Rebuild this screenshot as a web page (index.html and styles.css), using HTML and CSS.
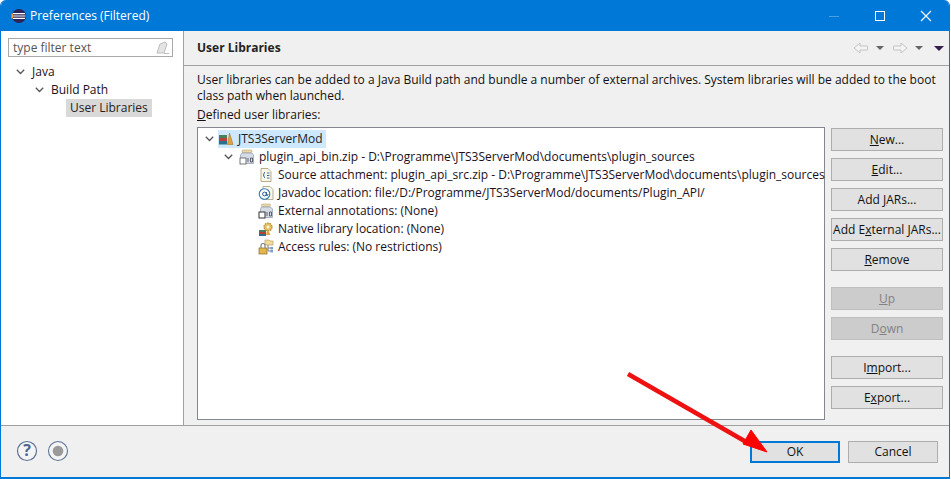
FILE: index.html
```html
<!DOCTYPE html>
<html lang="en">
<head>
<meta charset="utf-8">
<title>Preferences (Filtered)</title>
<link rel="stylesheet" href="styles.css">
</head>
<body>
<div class="window">
  <header class="titlebar">
    <svg class="app-icon" width="16" height="16" viewBox="0 0 16 16"><circle cx="8" cy="8" r="7" fill="#2c2255"/><path d="M1.5 5.5A7 7 0 0 0 1.5 10.5" stroke="#f7941e" stroke-width="1.6" fill="none"/><path d="M2 5.6h12M1.5 8h13M2 10.4h12" stroke="#fff" stroke-width="1.1"/></svg>
    <span class="title">Preferences (Filtered)</span>
    <div class="win-controls">
      <span class="wc"><svg width="12" height="12" viewBox="0 0 12 12"><path d="M1 6.5h10" stroke="#4f9fe3"/></svg></span>
      <span class="wc"><svg width="12" height="12" viewBox="0 0 12 12"><rect x="1.5" y="1.5" width="9" height="9" fill="none" stroke="#fff"/></svg></span>
      <span class="wc"><svg width="12" height="12" viewBox="0 0 12 12"><path d="M1 1l10 10M11 1L1 11" stroke="#fff" stroke-width="1.1"/></svg></span>
    </div>
  </header>
  <div class="body">
    <aside class="sidebar">
      <div class="filter">
        <span>type filter text</span>
        <svg width="16" height="14" viewBox="0 0 16 14"><path d="M2 12l3-9 5-2 2 2-3 9z" fill="#e4e4e4" stroke="#bdbdbd"/><path d="M9 12.5h5" stroke="#bdbdbd"/></svg>
      </div>
      <ul class="nav">
        <li class="nav-row lvl0"><svg class="chev" width="9" height="6" viewBox="0 0 9 6"><path d="M.8.8l3.7 3.7L8.200.8" fill="none" stroke="#555" stroke-width="1.300"/></svg><span class="nav-text">Java</span></li>
        <li class="nav-row lvl1"><svg class="chev" width="9" height="6" viewBox="0 0 9 6"><path d="M.8.8l3.7 3.7L8.200.8" fill="none" stroke="#555" stroke-width="1.300"/></svg><span class="nav-text">Build Path</span></li>
        <li class="nav-row lvl2"><span class="nav-text selected">User Libraries</span></li>
      </ul>
    </aside>
    <main class="main">
      <div class="page-head">
        <h1>User Libraries</h1>
        <div class="head-tools">
          <svg width="16" height="12" viewBox="0 0 16 12"><path d="M1 6l6-5v3h7.500v4H7v3z" fill="#f4f4f4" stroke="#c4c4c4"/></svg>
          <i class="tri"></i>
          <svg class="fwd" width="16" height="12" viewBox="0 0 16 12"><path d="M15 6L9 1v3H1.500v4H9v3z" fill="#f4f4f4" stroke="#c4c4c4"/></svg>
          <i class="tri"></i>
          <i class="tri dark"></i>
        </div>
      </div>
      <div class="page-body">
        <p class="desc">User libraries can be added to a Java Build path and bundle a number of external archives. System libraries will be added to the boot class path when launched.</p>
        <p class="label"><u>D</u>efined user libraries:</p>
        <div class="content">
          <div class="tree">
            <div class="row r0">
              <svg class="chev" width="9" height="6" viewBox="0 0 9 6"><path d="M.8.8l3.7 3.700L8.200.8" fill="none" stroke="#555" stroke-width="1.300"/></svg>
              <span class="sel">
                <svg class="ico" width="16" height="16" viewBox="0 0 16 16"><rect x="1" y="4" width="8" height="3" fill="#4a7f5a"/><rect x="1" y="7" width="8" height="3" fill="#b6423a"/><rect x="1" y="10" width="8" height="3.500" fill="#2c6f8f"/><path d="M9.500 13.500L11.500 2l3.500 11.500z" fill="#e2a23c" stroke="#a9741f" stroke-width=".6"/></svg>
                <span>JTS3ServerMod</span>
              </span>
            </div>
            <div class="row r1">
              <svg class="chev" width="9" height="6" viewBox="0 0 9 6"><path d="M.8.8l3.700 3.700L8.200.8" fill="none" stroke="#555" stroke-width="1.300"/></svg>
              <svg class="ico" width="16" height="16" viewBox="0 0 16 16"><rect x="3" y="1" width="10" height="2.500" rx="1" fill="#e8d9a8" stroke="#b9a878" stroke-width=".6"/><path d="M3 4h10l1.500 2v8.500h-13V6z" fill="#d6dce6" stroke="#8f9aac" stroke-width=".7"/><rect x="1" y="9" width="6" height="6" fill="#fff" stroke="#555" stroke-width=".8"/><path d="M9 9v4M11.500 9h2v4h-2z" stroke="#445" stroke-width=".8" fill="none"/></svg>
              <span>plugin_api_bin.zip - D:\Programme\JTS3ServerMod\documents\plugin_sources</span>
            </div>
            <div class="row r2">
              <svg class="ico" width="16" height="16" viewBox="0 0 16 16"><path d="M3 1.500h7l3 3v10H3z" fill="#fbf7e6" stroke="#a39a78" stroke-width=".8"/><path d="M7 5L6 6v1.500L5 8l1 .5V10l1 1" fill="none" stroke="#3b6ea5"/><path d="M9 6h2.500M9 8.500h2.500M9 11h2.500" stroke="#3b6ea5"/></svg>
              <span>Source attachment: plugin_api_src.zip - D:\Programme\JTS3ServerMod\documents\plugin_sources</span>
            </div>
            <div class="row r2">
              <svg class="ico" width="16" height="16" viewBox="0 0 16 16"><path d="M5 1.500h7l3 3v10H5z" fill="#fbf9ee" stroke="#a39a78" stroke-width=".8"/><circle cx="6.500" cy="9" r="5.300" fill="#fff" stroke="#3a78b5" stroke-width="1.100"/><circle cx="6.500" cy="9" r="1.900" fill="none" stroke="#2b5f95"/><path d="M8.400 7v3.500q1.600.5 1.600-1.500" fill="none" stroke="#2b5f95"/></svg>
              <span>Javadoc location: file:/D:/Programme/JTS3ServerMod/documents/Plugin_API/</span>
            </div>
            <div class="row r2">
              <svg class="ico" width="16" height="16" viewBox="0 0 16 16"><rect x="3.500" y="1" width="9" height="2.500" rx="1" fill="#e8d9a8" stroke="#b9a878" stroke-width=".6"/><path d="M3.500 4h9L14.500 6v8.500h-12V6z" fill="#d6dce6" stroke="#8f9aac" stroke-width=".7"/><rect x="1" y="9" width="6" height="6" fill="#fff" stroke="#333" stroke-width="1"/><path d="M9 9v4M11.500 9h2v4h-2z" stroke="#445" stroke-width=".8" fill="none"/></svg>
              <span>External annotations: (None)</span>
            </div>
            <div class="row r2">
              <svg class="ico" width="16" height="16" viewBox="0 0 16 16"><circle cx="10" cy="6" r="4" fill="#e3c060" stroke="#a88a3a" stroke-width="1.200" stroke-dasharray="1.500 1"/><circle cx="10" cy="6" r="1.500" fill="#fff6d8"/><rect x="1" y="9" width="7" height="2" fill="#4a7f5a"/><rect x="1" y="11" width="7" height="2" fill="#b6423a"/><rect x="1" y="13" width="7" height="2" fill="#2c6f8f"/><path d="M8 14l1.500-6 3 6z" fill="#e2a23c"/></svg>
              <span>Native library location: (None)</span>
            </div>
            <div class="row r2">
              <svg class="ico" width="16" height="16" viewBox="0 0 16 16"><path d="M7 1h4l1 1h3v4H7z" fill="#f0dc9c" stroke="#b9a060" stroke-width=".7"/><path d="M10 6v6M10 9h3M10 12h3" stroke="#667" stroke-width=".8"/><rect x="12.500" y="8" width="2.500" height="2.500" fill="#7aa0cc"/><rect x="12.500" y="11" width="2.500" height="2.500" fill="#7aa0cc"/><rect x="1" y="9" width="8" height="6" fill="#e2b74e" stroke="#8a6a20" stroke-width=".7"/><path d="M3 9V6.500a2 2 0 0 1 4 0V9" fill="none" stroke="#777" stroke-width="1.100"/></svg>
              <span>Access rules: (No restrictions)</span>
            </div>
          </div>
          <div class="buttons">
            <button class="btn"><u>N</u>ew...</button>
            <button class="btn"><u>E</u>dit...</button>
            <button class="btn">Add <u>J</u>ARs...</button>
            <button class="btn">Add E<u>x</u>ternal JARs...</button>
            <button class="btn"><u>R</u>emove</button>
            <button class="btn off gap"><u>U</u>p</button>
            <button class="btn off">D<u>o</u>wn</button>
            <button class="btn gap">I<u>m</u>port...</button>
            <button class="btn">E<u>x</u>port...</button>
          </div>
        </div>
      </div>
    </main>
  </div>
  <footer class="footer">
    <svg class="help" width="22" height="22" viewBox="0 0 22 22"><circle cx="11" cy="11" r="9.500" fill="#f4f4f4" stroke="#5f7396" stroke-width="1.200"/><text x="11" y="16" text-anchor="middle" class="qmark">?</text></svg>
    <svg class="rec" width="22" height="22" viewBox="0 0 22 22"><circle cx="11" cy="11" r="9.500" fill="#f4f4f4" stroke="#5f7396" stroke-width="1.100"/><circle cx="11" cy="11" r="5.300" fill="#9a9a9a"/></svg>
    <button class="btn foot default">OK</button>
    <button class="btn foot">Cancel</button>
  </footer>
  <svg class="arrow" width="951" height="479" viewBox="0 0 951 479"><path d="M628 374L748 443" stroke="#ee1111" stroke-width="4.500" fill="none"/><path d="M767 452L743 444 751 430z" fill="#ff0000" stroke="#ff0000"/></svg>
</div>
</body>
</html>
```
FILE: styles.css
```css
* { box-sizing: border-box; }
html, body { margin: 0; padding: 0; background: #fff; }
body { width: 951px; height: 479px; overflow: hidden; font: 12px/16px "Open Sans", "Noto Sans", sans-serif; color: #111; }
.window { position: relative; width: 950px; height: 479px; display: flex; flex-direction: column; background: #f0f0f0; border: solid #0078d7; border-width: 0 1px 2px 1px; border-radius: 6px 6px 0 0; overflow: hidden; }
.titlebar { height: 31px; flex: none; background: #0078d7; display: flex; align-items: center; padding-left: 10px; color: #fff; }
.app-icon { flex: none; }
.title { margin-left: 3px; font-size: 12px; }
.win-controls { margin-left: auto; display: flex; }
.wc { width: 46px; height: 31px; display: flex; align-items: center; justify-content: center; }
.body { flex: 1; display: flex; min-height: 0; background: #fff; }
.sidebar { width: 183px; flex: none; background: #fff; border-right: 1px solid #a0a0a0; padding: 7px 0 0 7px; }
.filter { width: 165px; height: 19px; border: 1px solid #a9a9a9; display: flex; align-items: center; justify-content: space-between; padding: 0 1px 0 4px; color: #555; background: #fff; }
.nav { list-style: none; margin: 6px 0 0; padding: 0; }
.nav-row { height: 18px; display: flex; align-items: center; }
.lvl0 { padding-left: 8px; }
.lvl1 { padding-left: 27px; }
.lvl2 { padding-left: 58px; }
.chev { flex: none; }
.nav-text { margin-left: 7px; color: #1c1020; }
.nav-text.selected { margin-left: 0; background: #d9d9d9; padding: 1px 4px; height: 18px; color: #222; }
.main { flex: 1; display: flex; flex-direction: column; min-width: 0; background: #f0f0f0; }
.page-head { height: 35px; flex: none; display: flex; align-items: center; justify-content: space-between; padding: 0 5px 0 13px; border-bottom: 1px solid #a0a0a0; }
.page-head h1 { margin: 0; font-size: 12px; font-weight: 700; color: #222; }
.head-tools { display: flex; align-items: center; }
.fwd { margin-left: 8px; }
.tri { width: 0; height: 0; border: 4px solid transparent; border-top: 4px solid #666; border-bottom: 0; margin-left: 7px; }
.tri.dark { border-top: 5px solid #33204f; margin-left: 11px; border-left-width: 5px; border-right-width: 5px; }
.page-body { flex: 1; padding: 6px 5px 5px 13px; display: flex; flex-direction: column; min-height: 0; }
.desc { margin: 0; width: 750px; }
.label { margin: 3px 0 4px; height: 16px; }
.content { flex: 1; display: flex; gap: 6px; min-height: 0; }
.tree { width: 628px; flex: none; background: #fff; border: 1px solid #828790; padding-top: 1px; }
.row { height: 18px; display: flex; align-items: center; white-space: nowrap; color: #1c1020; }
.row .ico { flex: none; margin-right: 4px; }
.r0 { padding-left: 7px; height: 19px; }
.r0 .chev { margin-right: 4px; }
.sel { display: flex; align-items: center; background: #cde8ff; height: 18px; padding-right: 3px; color: #222; }
.sel .ico { margin-right: 4px; }
.r1 { padding-left: 26px; }
.r1 .chev { margin-right: 6px; }
.r2 { padding-left: 60px; }
.buttons { flex: 1; display: flex; flex-direction: column; gap: 7px; padding-top: 1px; }
.btn { width: 112px; height: 23px; flex: none; padding: 0; font: inherit; background: #e1e1e1; border: 1px solid #adadad; color: #111; white-space: nowrap; }
.btn.off { background: #cccccc; border-color: #bfbfbf; color: #838383; }
.btn.gap { margin-top: 9px; }
.footer { height: 52px; flex: none; display: flex; align-items: center; padding: 0 11px 2px 15px; border-top: 1px solid #a0a0a0; }
.qmark { font: 700 16px "Open Sans", sans-serif; fill: #4c6490; }
.rec { margin-left: 9px; margin-right: auto; }
.foot { width: 90px; height: 22px; margin-top: 2px; }
.foot.default { border: 2px solid #0078d7; margin-right: 8px; }
.arrow { position: absolute; left: -1px; top: 0; pointer-events: none; }
```
